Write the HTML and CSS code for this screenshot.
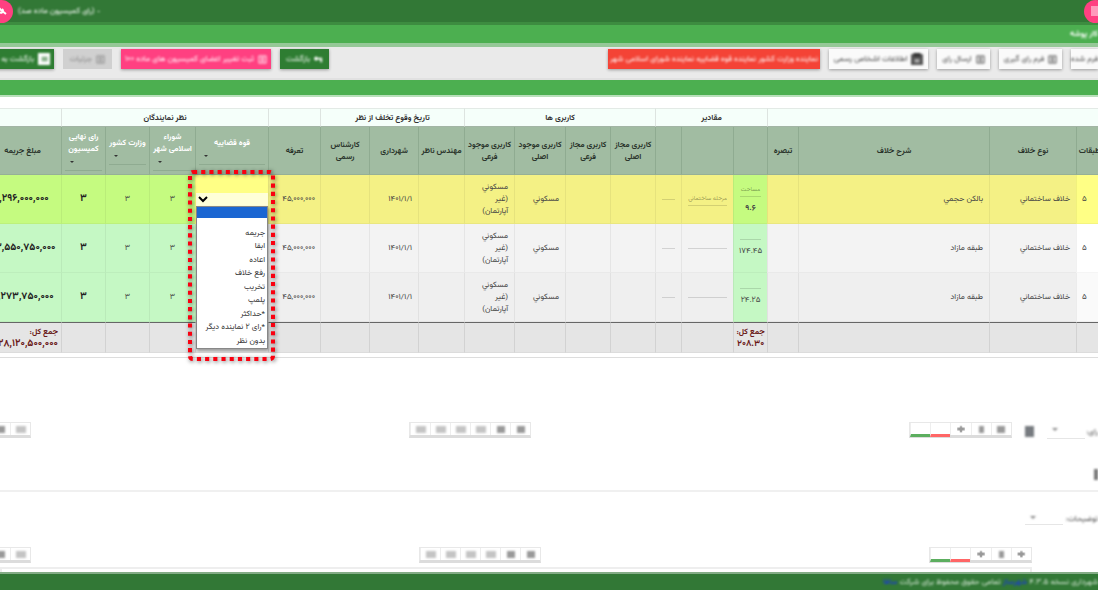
FILE: index.html
```html
<!DOCTYPE html>
<html lang="fa" dir="rtl">
<head>
<meta charset="utf-8">
<title>کارپوشه</title>
<link rel="stylesheet" href="styles.css">
</head>
<body>
<svg class="defs" aria-hidden="true">
  <symbol id="doc" viewBox="0 0 10 10"><path d="M1 1h8v8H1zM3 3h4M3 5h4M3 7h4" fill="none" stroke="currentColor" stroke-width="1"/></symbol>
  <symbol id="undo" viewBox="0 0 10 10"><path d="M1 4h7v4M3 2L1 4l2 2" fill="none" stroke="currentColor" stroke-width="2"/></symbol>
  <symbol id="sheet" viewBox="0 0 10 10"><path d="M0 0h10v10H0z" fill="#fff"/><path d="M3 3h5v4H3z" fill="#8ab38c"/></symbol>
  <symbol id="person" viewBox="0 0 10 10"><path d="M0 1h10v9H0z" fill="#555"/><path d="M2 0h6v3H2z" fill="#333"/><path d="M3 5h4v3H3z" fill="#aaa"/></symbol>
</svg>

<header class="topbar">
  <button class="fab fab-menu" aria-label="منو"><i></i></button>
  <span class="soft">- (رای کمیسیون ماده صد)</span>
  <button class="fab fab-key" aria-label="کلید"><svg viewBox="0 0 12 12"><path d="M2 2l3 3M5 5l5 4M6 4a2 2 0 1 1-3 2" fill="none" stroke="#fff" stroke-width="2"/></svg></button>
</header>
<div class="titlebar"><h1 class="soft">کار پوشه</h1></div>

<nav class="tools">
  <button class="btn w-edge"><span class="soft">فرم شده</span></button>
  <button class="btn w-m"><svg><use href="#doc"/></svg><span class="soft">فرم رای گیری</span></button>
  <button class="btn w-s"><svg><use href="#doc"/></svg><span class="soft">ارسال رای</span></button>
  <button class="btn w-l"><svg class="dark"><use href="#person"/></svg><span class="soft">اطلاعات اشخاص رسمی</span></button>
  <button class="btn red"><span class="soft">نماینده وزارت کشور نماینده قوه قضاییه نماینده شورای اسلامی شهر</span></button>
  <span class="grow"></span>
  <button class="btn green w-xs"><svg><use href="#undo"/></svg><span class="soft">بازگشت</span></button>
  <button class="btn pink"><svg><use href="#doc"/></svg><span class="soft">ثبت تغییر اعضای کمیسیون های ماده ۱۰۰</span></button>
  <button class="btn off w-xs" disabled><svg><use href="#doc"/></svg><span class="soft">جزئیات</span></button>
  <button class="btn green w-last"><svg class="dark"><use href="#sheet"/></svg><span class="soft">بازگشت به</span></button>
</nav>
<div class="band"></div>

<main>
<section class="grid-wrap">
<table class="grid">
  <colgroup>
    <col class="c26"><col class="c87"><col><col class="c31"><col class="c34"><col class="c52"><col class="c26"><col class="c45"><col class="c45"><col class="c51"><col class="c50"><col class="c46"><col class="c49"><col class="c49"><col class="c52"><col class="c73"><col class="c46"><col class="c44"><col class="c44"><col class="c78">
  </colgroup>
  <thead>
    <tr class="groups"><th colspan="4"></th><th colspan="3">مقادیر</th><th colspan="4">کاربری ها</th><th colspan="3">تاریخ وقوع تخلف از نظر</th><th></th><th colspan="4">نظر نمایندگان</th><th></th></tr>
    <tr class="heads">
      <th>طبقات</th><th>نوع خلاف</th><th>شرح خلاف</th><th>تبصره</th><th></th><th></th><th></th>
      <th>کاربری مجاز اصلی</th><th>کاربری مجاز فرعی</th><th>کاربری موجود اصلی</th><th>کاربری موجود فرعی</th>
      <th>مهندس ناظر</th><th>شهرداری</th><th>کارشناس رسمی</th><th>تعرفه</th>
      <th class="rep"><label for="r1">قوه قضاییه</label><div class="pick"><select id="r1"></select></div></th>
      <th class="rep"><label for="r2">شوراء<br>اسلامی شهر</label><div class="pick"><select id="r2"></select></div></th>
      <th class="rep"><label for="r3">وزارت کشور</label><div class="pick"><select id="r3"></select></div></th>
      <th class="rep"><label for="r4">رای نهایی کمیسیون</label><div class="pick"><select id="r4"></select></div></th>
      <th>مبلغ جریمه</th>
    </tr>
  </thead>
  <tbody>
    <tr class="picked">
      <td class="floor">۵</td><td>خلاف ساختماني</td><td>بالكن حجمي</td><td></td>
      <td class="ok num"><span class="field">مساحت</span><div class="strong">۹.۶</div></td>
      <td class="mid"><span class="field">مرحله ساختمانی</span></td><td class="mid"><span class="field"></span></td>
      <td></td><td></td><td>مسكوني</td><td>مسكوني (غير آپارتمان)</td><td></td><td>۱۴۰۱/۱/۱</td><td></td><td class="fee">۴۵,۰۰۰,۰۰۰</td>
      <td class="vote">
        <select class="vote-select" aria-label="قوه قضاییه"></select>
        <ul class="menu" role="listbox">
          <li class="on" role="option" aria-selected="true"></li><li class="blank" role="option"></li>
          <li role="option">جریمه</li><li role="option">ابقا</li><li role="option">اعاده</li><li role="option">رفع خلاف</li><li role="option">تخریب</li><li role="option">پلمپ</li><li role="option">*حداکثر</li><li role="option">*رای ۲ نماینده دیگر</li><li role="option">بدون نظر</li>
        </ul>
        <svg class="marker" viewBox="0 0 94 200" aria-hidden="true"><rect x="6" y="6" width="83" height="187" rx="3" fill="none" stroke="#fa0010" stroke-width="4" stroke-dasharray="4.1 4.1"/></svg>
      </td>
      <td class="ok num">۳</td><td class="ok num">۳</td><td class="ok num bold">۳</td><td class="ok sum">۱,۲۹۶,۰۰۰,۰۰۰</td>
    </tr>
    <tr>
      <td class="floor">۵</td><td>خلاف ساختماني</td><td>طبقه مازاد</td><td></td>
      <td class="ok num"><span class="field"></span><div>۱۷۴.۴۵</div></td>
      <td class="mid"><span class="field"></span></td><td class="mid"><span class="field"></span></td>
      <td></td><td></td><td>مسكوني</td><td>مسكوني (غير آپارتمان)</td><td></td><td>۱۴۰۱/۱/۱</td><td></td><td class="fee">۴۵,۰۰۰,۰۰۰</td>
      <td class="ok"></td><td class="ok num">۳</td><td class="ok num">۳</td><td class="ok num bold">۳</td><td class="ok sum">۲۳,۵۵۰,۷۵۰,۰۰۰</td>
    </tr>
    <tr class="alt">
      <td class="floor">۵</td><td>خلاف ساختماني</td><td>طبقه مازاد</td><td></td>
      <td class="ok num"><span class="field"></span><div>۲۴.۲۵</div></td>
      <td class="mid"><span class="field"></span></td><td class="mid"><span class="field"></span></td>
      <td></td><td></td><td>مسكوني</td><td>مسكوني (غير آپارتمان)</td><td></td><td>۱۴۰۱/۱/۱</td><td></td><td class="fee">۴۵,۰۰۰,۰۰۰</td>
      <td class="ok"></td><td class="ok num">۳</td><td class="ok num">۳</td><td class="ok num bold">۳</td><td class="ok sum">۳,۲۷۳,۷۵۰,۰۰۰</td>
    </tr>
  </tbody>
  <tfoot>
    <tr><td></td><td></td><td></td><td></td><td class="total">جمع کل:<br><span class="amount">۲۰۸.۳۰</span></td><td></td><td></td><td></td><td></td><td></td><td></td><td></td><td></td><td></td><td></td><td></td><td></td><td></td><td></td><td class="total wide">جمع کل:<br><span class="amount large">۲۸,۱۲۰,۵۰۰,۰۰۰</span></td></tr>
  </tfoot>
</table>
</section>

<section class="panel first">
  <div class="row">
    <div class="lead">
      <label class="soft cut" for="s1">رای:</label><div class="mini"><select id="s1"></select></div><i class="chip"></i>
      <div class="seg"><b></b><b class="thin"></b><b class="plus"></b><span class="r"></span><span class="g"></span></div>
    </div>
    <div class="seg pager"><b></b><b></b><b class="dim"></b><b class="dim"></b><b class="dim"></b><b class="dim"></b></div>
    <div class="seg pager edge"><b class="dim"></b><b></b><b></b><b></b><b></b><b></b></div>
  </div>
  <i class="stub"></i>
</section>
<section class="panel second">
  <div class="ask"><label class="soft" for="s2">توضیحات:</label><div class="mini"><select id="s2"></select></div></div>
  <div class="row">
    <div class="lead inset"><div class="seg"><b class="plus"></b><b class="thin"></b><b class="plus"></b><span class="r"></span><span class="g"></span></div></div>
    <div class="seg pager"><b></b><b></b><b class="dim"></b><b class="dim"></b><b class="dim"></b><b class="dim"></b></div>
    <div class="seg pager edge"><b class="dim"></b><b></b><b></b><b></b><b></b><b></b></div>
  </div>
  <div class="box"></div>
</section>
</main>
<footer><p class="soft">شهرداری نسخه ۴.۳.۵ <a href="#">شهرساز</a> تمامی حقوق محفوظ برای شرکت <a href="#">سافا</a></p></footer>
</body>
</html>
```

FILE: styles.css
```css
* { box-sizing: border-box; }
html, body { height: 100%; }
body {
  margin: 0; overflow: hidden; display: flex; flex-direction: column;
  background: #fff; color: #444;
  font: 8px/12px "Vazirmatn", "Noto Sans Arabic", "DejaVu Sans", sans-serif;
}
button, select { font: inherit; color: inherit; }
.defs { position: absolute; width: 0; height: 0; }
.soft { filter: blur(1px); white-space: nowrap; }

.topbar {
  display: flex; align-items: center; justify-content: space-between; flex: none;
  height: 25px; background: #327836; border-bottom: 3px solid #3d8c40; color: #fff;
}
.topbar > .soft { margin-right: auto; margin-left: 5px; }
.fab { flex: none; width: 23px; height: 23px; padding: 0; border: 0; border-radius: 50%; background: #ff4081; display: grid; place-items: center; }
.fab svg { width: 12px; height: 12px; }
.fab-menu { margin-right: -9px; }
.fab-menu i { width: 10px; height: 10px; background: #ff9abb; }
.fab-key { margin-left: -10px; }
.titlebar { flex: none; height: 22px; padding: 3px 0; background: #4caf50; border-bottom: 4px solid #95c897; color: #fff; }
.titlebar h1 { margin: 0; font-size: 8px; line-height: 12px; }

.tools { display: flex; align-items: center; gap: 9px; flex: none; height: 33px; padding-bottom: 7px; background: #eaeaea; border-bottom: 2px solid #e1e1e1; }
.btn {
  display: flex; align-items: center; justify-content: center; gap: 4px; flex: none;
  height: 20px; padding: 0 4px; border: 0;
  background: #fafafa; color: #444; font-size: 8px; box-shadow: 0 1px 3px #0005;
}
.btn svg { flex: none; width: 9px; height: 9px; filter: blur(1px); }
.btn .dark { width: 12px; height: 12px; }
.w-edge { width: 27px; padding: 0; }
.w-m { width: 63px; }
.w-s { width: 53px; }
.w-l { width: 99px; }
.w-xs { width: 49px; }
.w-last { width: 62px; margin-left: -8px; justify-content: flex-start; }
.red { width: 212px; background: #f44336; color: #fff; }
.green { background: #2e7d32; color: #fff; }
.pink { width: 150px; background: #ff4081; color: #fff; }
.off { background: #d0d0d0; color: #888; box-shadow: none; }
.grow { flex: 1; }
.band { flex: none; height: 17px; background: #4caf50; border-bottom: 2px solid #b8dfba; }

main { flex: 1; min-height: 0; overflow: hidden; padding-top: 11px; }
.grid-wrap { border-bottom: 1px solid #ddd; padding-bottom: 4px; }
.grid { width: calc(100% + 21px); margin: 0 -4px 0 -17px; table-layout: fixed; border-collapse: separate; border-spacing: 0; }
.c26 { width: 26px; } .c31 { width: 31px; } .c34 { width: 34px; } .c44 { width: 44px; }
.c45 { width: 45px; } .c46 { width: 46px; } .c49 { width: 49px; } .c50 { width: 50px; }
.c51 { width: 51px; } .c52 { width: 52px; } .c73 { width: 73px; } .c78 { width: 78px; } .c87 { width: 87px; }
th, td { padding: 0 6px; border-left: 1px solid #0000000d; border-bottom: 1px solid #0000000a; text-align: start; }
.groups th { height: 19px; padding: 0; background: #f5fffa; border-top: 1px solid #e3eae6; border-left-color: #dde4e0; border-bottom: 1px solid #a3b5a5; color: #333; text-align: center; }
.heads th { height: 48px; padding: 0 1px; background: #a1bca2; border-left-color: #8fab91; border-bottom-color: #96b097; color: #2b352c; text-align: center; }
.heads .rep { padding: 0 3px; color: #fff; }
.rep label { display: block; margin: 0 -3px; }
.pick { position: relative; color: #333; }
.pick select { display: block; width: 100%; height: 16px; border: 0; border-bottom: 1px solid #8fab91; background: none; appearance: none; }
.pick::after, .mini::after { content: ""; position: absolute; left: 5px; top: 6px; border: 2px solid transparent; border-top-color: currentColor; }
tbody td { height: 49px; background: #f3f3f3; }
.alt td { background: #efefef; }
.picked td { background: #f4f185; }
tbody .floor { padding: 0 5px; background: #fff; text-align: left; }
.alt .floor { background: #fafafa; }
.picked .floor { background: #ffff85; }
tbody .ok { background: #c5f8c4; }
.picked .ok { background: #c5fb80; }
.num, .sum, .mid { text-align: center; padding: 0; }
.bold, .sum { font-weight: bold; color: #222; font-size: 10px; }
.sum { white-space: nowrap; }
.fee { padding: 0 5px 0 0; white-space: nowrap; }
.strong { font-weight: bold; }
.field { display: block; min-height: 1px; margin: 0 6px; border-bottom: 1px solid #0002; color: #0006; font-size: 6px; white-space: nowrap; }
.num .field + div { margin-top: 5px; }
.picked .vote { position: relative; padding: 0; background: #ffff85; }
.vote-select { display: block; width: 100%; height: 13px; margin: 0; padding: 0; border: 0; background: #ffffd8; color: #000; font-size: 6px; }
.menu {
  position: absolute; z-index: 2; left: 0; right: 0; top: 31px; height: 143px; margin: 0; padding: 0;
  display: flex; flex-direction: column; list-style: none; background: #fff; color: #333;
  border: 1px solid #888; box-shadow: 1px 2px 3px #0005; white-space: nowrap;
}
.menu li { flex: 1; padding: 0 2px; }
.menu .on { flex: none; height: 11px; background: #1b66d2; }
.menu .blank { flex: none; height: 9px; }
.marker { position: absolute; z-index: 3; left: -12px; top: -9px; width: 94px; height: 200px; filter: drop-shadow(1px 1px 2px #0009); pointer-events: none; }
tfoot td { height: 31px; padding: 0; background: #e5e5e5; border-top: 1px solid #666; border-left: 1px solid #d2d2d2; }
tfoot .total { color: #6b1a1a; font-weight: bold; text-align: center; white-space: nowrap; }
tfoot .wide { padding-right: 3px; text-align: start; }
.amount { font-size: 9px; }
.large { font-size: 10px; }

.panel { border-bottom: 2px solid #f0f0f0; }
.first { height: 134px; padding-top: 64px; }
.row { display: flex; align-items: flex-start; justify-content: space-between; }
.lead { display: flex; }
.inset { margin-right: 66px; }
.cut { width: 13px; margin-top: 4px; }
.mini { position: relative; width: 38px; height: 17px; border-bottom: 1px solid #e6e6e6; color: #888; }
.mini::after { left: 5px; filter: blur(1px); border-width: 3px; }
.mini select { width: 100%; height: 100%; border: 0; background: none; appearance: none; }
.chip { width: 9px; height: 11px; margin: 4px 13px 0; background: #777b80; filter: blur(1px); }
.seg { display: flex; width: 103px; height: 16px; border: 1px solid #e8e8e8; border-bottom: 3px solid #dcdcdc; }
.seg > * { flex: 1; display: grid; place-items: center; border-left: 1px solid #eee; }
.seg b::before { content: ""; width: 8px; height: 7px; background: #999; filter: blur(1px); }
.seg .dim::before { width: 10px; background: #c4c4c4; }
.seg .thin::before { width: 5px; }
.seg .plus::before { clip-path: polygon(35% 0, 65% 0, 65% 30%, 100% 30%, 100% 70%, 65% 70%, 65% 100%, 35% 100%, 35% 70%, 0 70%, 0 30%, 35% 30%); }
.seg .r, .seg .g { height: 14px; border-bottom: 3px solid #f66; }
.seg .g { border-bottom-color: #5cae5f; }
.pager { width: 122px; }
.edge { margin-left: -91px; }
.stub { display: block; width: 4px; height: 11px; margin-top: 30px; background: #777; filter: blur(1px); }
.second { padding-top: 18px; border: 0; }
.ask { display: flex; height: 37px; }
.ask label { width: 35px; margin-top: 3px; }
.ask .mini { height: 15px; }
.box { height: 30px; margin: 4px 66px 0 0; border: 2px solid #eee; }
footer { flex: none; height: 18px; background: #327836; border-top: 2px solid #84ac86; color: #dcebdc; }
footer p { margin: 2px 0 0; }
footer a { color: #1c3fc4; font-weight: bold; text-decoration: none; }
```
